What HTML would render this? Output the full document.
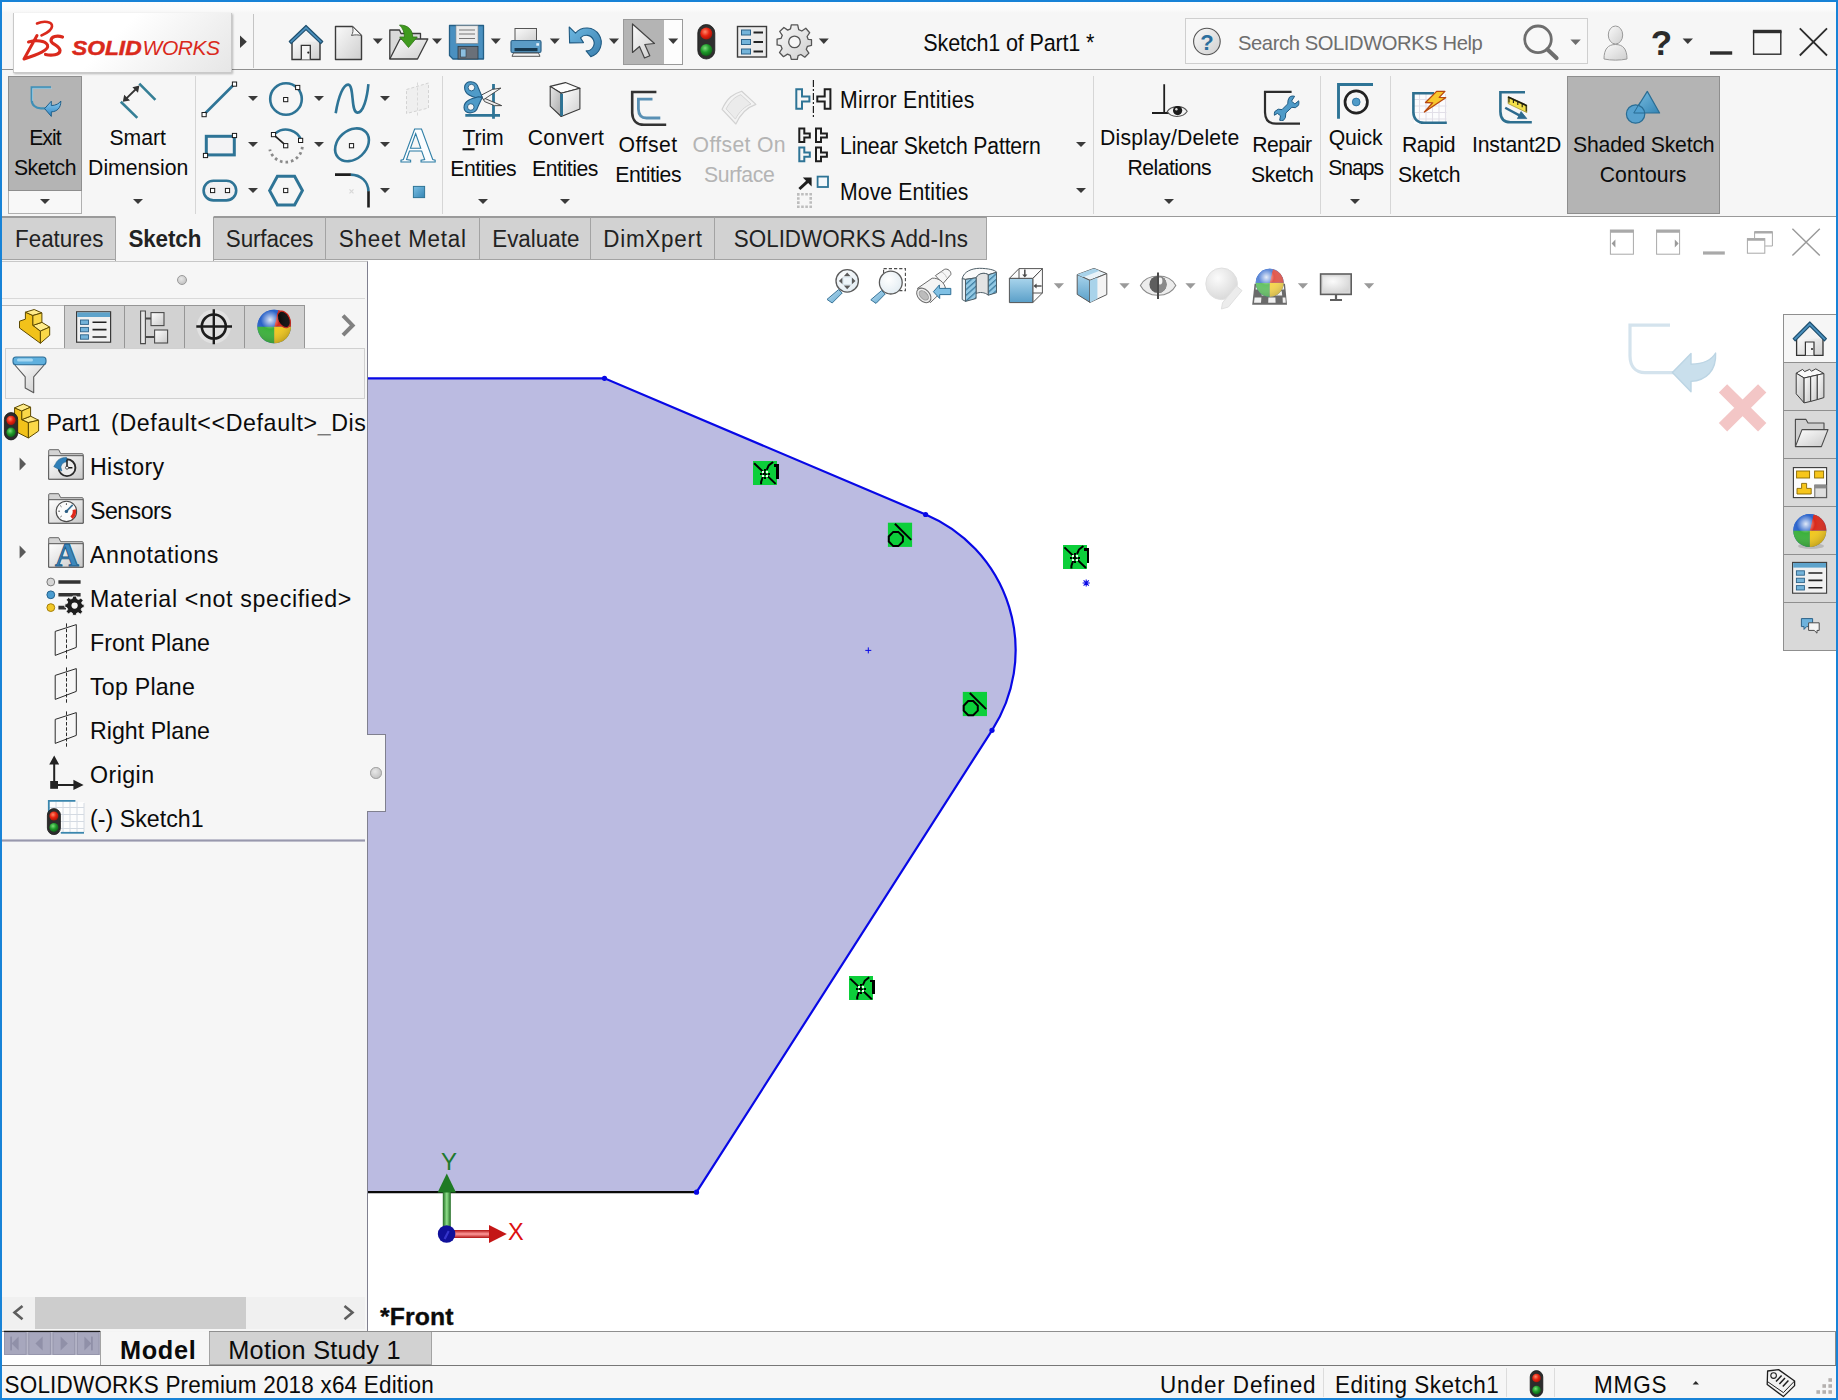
<!DOCTYPE html>
<html lang="en">
<head>
<meta charset="utf-8">
<title>Sketch1 of Part1 * - SOLIDWORKS Premium 2018 x64 Edition</title>
<style>
html,body{margin:0;padding:0}
body{width:1838px;height:1400px;position:relative;overflow:hidden;background:#f6f6f6;font-family:"Liberation Sans",sans-serif;color:#000}
.a{position:absolute}
.t{position:absolute;white-space:pre;line-height:1;color:#0b0b0b}
u{text-decoration-thickness:1.5px;text-underline-offset:3px}
svg{position:absolute;overflow:visible}
.tab{position:absolute;top:217px;height:43px;background:#d2d2d2;border:1px solid #a3a3a3;border-top-color:#9a9a9a;box-sizing:border-box}
.dd{position:absolute;width:0;height:0;border-left:5px solid transparent;border-right:5px solid transparent;border-top:5.5px solid #3a3a3a}
.ddg{position:absolute;width:0;height:0;border-left:5px solid transparent;border-right:5px solid transparent;border-top:5.5px solid #9a9a9a}
.vsep{position:absolute;width:1px;background:#d6d6d6;top:76px;height:138px}
.pressed{position:absolute;background:#b4b4b4;border:1px solid #8e8e8e;box-sizing:border-box}
.ptab{position:absolute;top:305px;height:44px;background:#d2d2d2;border:1px solid #969696;box-sizing:border-box}
.tp{position:absolute;left:1783px;width:53px;height:49px;background:#d9d9d9;border:1px solid #8f8f8f;border-right:none;box-sizing:border-box}
</style>
</head>
<body>
<div id="window-frame">
<!-- window frame / blue border -->
<div class="a" id="frame-top" style="left:0;top:0;width:1838px;height:2px;background:#1883d7"></div>
<div class="a" id="frame-left" style="left:0;top:0;width:2px;height:1400px;background:#1883d7"></div>
<div class="a" id="frame-right" style="left:1836px;top:0;width:2px;height:1400px;background:#1883d7"></div>
<div class="a" id="frame-bottom" style="left:0;top:1398px;width:1838px;height:2px;background:#1883d7"></div>
<!-- graphics area (white) -->
<div class="a" id="viewport" style="left:368px;top:217px;width:1468px;height:1114px;background:#fff"></div>
<!-- title bar bottom line -->
<div class="a" style="left:2px;top:69px;width:1834px;height:1px;background:#8f8f8f"></div>
<!-- ribbon bottom line -->
<div class="a" style="left:2px;top:216px;width:1834px;height:1px;background:#9a9a9a"></div>
<div class="labels">

</div>
</div>
<header id="titlebar">
<!-- title bar -->
<div class="a" style="left:2px;top:2px;width:1834px;height:11px;background:linear-gradient(#fefefe,#fbfbfb 70%,#f6f6f6)"></div>
<div class="a" id="logo-plate" style="left:13px;top:13px;width:219px;height:60px;background:linear-gradient(135deg,#ffffff 45%,#e6e6e6 100%);border:1px solid #c9c9c9;border-top:none;box-shadow:1px 1px 2px rgba(0,0,0,.25);box-sizing:border-box"></div>
<div class="a" style="left:253px;top:14px;width:1px;height:54px;background:#c4c4c4"></div>
<div class="a" id="searchbox" style="left:1185px;top:18px;width:403px;height:46px;border:1px solid #cfcfcf;box-sizing:border-box;background:#f8f8f8"></div>
<div class="pressed" style="left:623px;top:19px;width:60px;height:46px;background:#fdfdfd;border-color:#9a9a9a"></div>
<div class="a" style="left:624px;top:20px;width:40px;height:44px;background:#b4b4b4"></div>
<svg id="title-icons" style="left:0;top:0" width="1838" height="72" viewBox="0 0 1838 72">
<defs>
<linearGradient id="gGray" x1="0" y1="0" x2="1" y2="1"><stop offset="0" stop-color="#fafafa"/><stop offset="1" stop-color="#cfcfcf"/></linearGradient>
<linearGradient id="gBlue" x1="0" y1="0" x2="0" y2="1"><stop offset="0" stop-color="#7fb9dc"/><stop offset="1" stop-color="#3a7fae"/></linearGradient>
<linearGradient id="gUndo" x1="0" y1="0" x2="1" y2="1"><stop offset="0" stop-color="#6db8e2"/><stop offset="1" stop-color="#3a7fae"/></linearGradient>
<radialGradient id="gRed" cx=".4" cy=".35" r=".7"><stop offset="0" stop-color="#ff8a6a"/><stop offset=".5" stop-color="#e8230f"/><stop offset="1" stop-color="#9c1208"/></radialGradient>
<radialGradient id="gGreen" cx=".4" cy=".35" r=".7"><stop offset="0" stop-color="#7be07a"/><stop offset=".5" stop-color="#1f9a2a"/><stop offset="1" stop-color="#0d5c16"/></radialGradient>
</defs>
<!-- DS logo mark -->
<g fill="none" stroke="#da291c" stroke-linecap="round" stroke-linejoin="round">
<path d="M37 23.5 C44 20.5 52.5 21.5 52 26.5 C51.5 31 45.5 33.5 41.5 35.5" stroke-width="2.6"/>
<path d="M28.5 42 C36 40 45 40.5 47.5 45 C49.5 50 38 54.5 24 59 L37 35.5" stroke-width="3"/>
<path d="M62.5 37 C57 35 51 36.5 51 40.5 C51 44.5 59.5 45 60 50.5 C60 55 51.5 56 45.5 54.5" stroke-width="3.2"/>
</g>
<path d="M240 35.5 L246.8 41.8 L240 48Z" fill="#3a3a3a"/>
<!-- home -->
<g>
<path d="M292 41.5 L306 28.6 L320 41.5Z" fill="#f3f3f3"/>
<path d="M292 41.5 H320 V59.5 H292Z" fill="url(#gGray)"/><path d="M292 40 V59.5 H320 V40" fill="none" stroke="#333" stroke-width="1.4"/>
<path d="M301.3 59.5 V45.3 H310.3 V59.5" fill="#f4f4f4" stroke="#333" stroke-width="1.3"/>
<circle cx="308.3" cy="52.6" r="1.1" fill="#222"/>
<path d="M289.3 41.5 L306 25.5 L322.7 41.5 L320.8 43.6 L306 29.6 L291.2 43.6Z" fill="#4a90be" stroke="#1f4f6e" stroke-width="1.2" stroke-linejoin="round"/>
</g>
<!-- new -->
<path d="M335.5 26.5 H352.5 L361.5 35.5 V59.5 H335.5Z" fill="url(#gGray)" stroke="#3c3c3c" stroke-width="1.4" stroke-linejoin="round"/>
<path d="M352.5 26.5 C353.5 30 353 33 351.5 35.5 C355 34.5 358.5 34.8 361.5 35.5Z" fill="#f7f7f7" stroke="#5a5a5a" stroke-width="1"/>
<path d="M372.8 38.5h10l-5 5.5z" fill="#3a3a3a"/>
<!-- open -->
<g stroke-linejoin="round">
<path d="M389.8 59 V30 H399.5 L401 33.5 H420.5 V39" fill="#d9d9d9" stroke="#3c3c3c" stroke-width="1.3"/>
<path d="M389.8 59 L400 39 H427.8 L417.5 59Z" fill="url(#gGray)" stroke="#3c3c3c" stroke-width="1.3"/>
<path d="M399.5 25 C408 25 412.5 29.5 412.7 37 L417.3 37 L408.5 47.5 L399.7 37 L404.5 37 C404.3 31.5 402.5 28 399.5 25Z" fill="#3f9a1e" stroke="#2c7412" stroke-width=".8"/>
</g>
<path d="M432 38.5h10l-5 5.5z" fill="#3a3a3a"/>
<!-- save -->
<g>
<path d="M449.5 25.5 H483.5 V59 H453 L449.5 55.5Z" fill="#4a90c0" stroke="#245f86" stroke-width="1.3" stroke-linejoin="round"/>
<rect x="456" y="25.8" width="22" height="17.5" fill="#ececec" stroke="#8a8a8a" stroke-width=".6"/>
<path d="M459 30h16M459 34h16M459 38.5h16" stroke="#777" stroke-width="1.1"/>
<rect x="458" y="46.5" width="20" height="12.5" fill="#6a7079" stroke="#2c3d4a" stroke-width=".8"/>
<rect x="460.5" y="49" width="5.5" height="8" fill="#8cbfe0" stroke="#2c3d4a" stroke-width=".6"/>
</g>
<path d="M490.8 38.5h10l-5 5.5z" fill="#3a3a3a"/>
<!-- print -->
<g>
<rect x="515" y="28.5" width="21.5" height="14" fill="url(#gGray)" stroke="#555" stroke-width="1"/>
<rect x="511" y="40.5" width="30" height="12" rx="1.5" fill="#5b9cc6" stroke="#2d6288" stroke-width="1.2"/>
<rect x="514.5" y="48" width="23" height="3.2" fill="#17384e"/>
<rect x="536.3" y="43.2" width="2.8" height="2.5" fill="#e8f3fa"/>
<path d="M513.5 53 H538.5 L540 56.3 H512Z" fill="#f3f3f3" stroke="#555" stroke-width="1"/>
</g>
<path d="M549.8 38.5h10l-5 5.5z" fill="#3a3a3a"/>
<!-- undo -->
<path d="M569.2 27 L575.5 33.2 A14.6 14.6 0 1 1 590.8 56.6 L586.1 50.9 A7.8 7.8 0 1 0 580.5 37.9 L583.5 42.6 L569.6 42.9Z" fill="url(#gUndo)" stroke="#1f5a82" stroke-width="1.1" stroke-linejoin="round"/>
<path d="M609 38.5h10l-5 5.5z" fill="#3a3a3a"/>
<!-- select cursor -->
<path d="M632.5 24 V52.5 L639.5 46.5 L644.5 58 L649.8 55.7 L644.8 44.5 L654.5 43.5Z" fill="url(#gGray)" stroke="#444" stroke-width="1.2" stroke-linejoin="round"/>
<path d="M668.2 38.5h10l-5 5.5z" fill="#3a3a3a"/>
<!-- traffic light -->
<rect x="697.8" y="24.5" width="17" height="34.5" rx="8.5" fill="#2f2f2f" stroke="#1a1a1a" stroke-width=".8"/>
<circle cx="706.3" cy="33.6" r="6" fill="url(#gRed)"/>
<circle cx="706.3" cy="49.9" r="6" fill="url(#gGreen)"/>
<!-- options -->
<g>
<rect x="737.5" y="26.5" width="29" height="30.5" fill="#ececec" stroke="#3c3c3c" stroke-width="1.4"/>
<g fill="#74b4da" stroke="#2d6288" stroke-width="1"><rect x="741.5" y="30" width="9" height="5"/><rect x="741.5" y="39.5" width="9" height="5"/><rect x="741.5" y="49" width="9" height="5"/></g>
<path d="M753.5 32.5h9.5M753.5 42h9.5M753.5 51.5h9.5" stroke="#222" stroke-width="1.8"/>
</g>
<!-- gear -->
<g transform="translate(794.5 41.9)">
<path id="gearp" fill="url(#gGray)" stroke="#555" stroke-width="1.3" stroke-linejoin="round" d="M-3.2 -17 H3.2 L4.2 -12.3 L7.3 -10.9 L11.3 -13.6 L15.2 -9.2 L12.6 -5.4 L13.6 -2.6 L17 -2.2 V3.4 L13 4.4 L11.8 7.4 L14.4 11.2 L10.3 15.3 L6.4 12.6 L3.6 13.8 L2.8 17.4 H-3.2 L-4.2 13.4 L-7 12.2 L-11 14.8 L-15 10.6 L-12.4 6.8 L-13.6 3.8 L-17.4 3 V-2.8 L-13.4 -3.6 L-12.2 -6.6 L-14.8 -10.4 L-10.6 -14.4 L-6.8 -11.8 L-4 -13Z"/>
<circle r="5.8" fill="#f6f6f6" stroke="#555" stroke-width="1.3"/>
</g>
<path d="M818.8 38.5h10l-5 5.5z" fill="#3a3a3a"/>
<!-- help circle -->
<circle cx="1206.9" cy="41.5" r="13.3" fill="url(#gGray)" stroke="#555" stroke-width="1.1"/>
<text x="1206.9" y="49.5" font-family="Liberation Sans, sans-serif" font-weight="bold" font-size="22" fill="#2a6f9e" text-anchor="middle">?</text>
<!-- search magnifier -->
<circle cx="1538" cy="39.3" r="13.3" fill="none" stroke="#6e6e6e" stroke-width="2.8"/>
<path d="M1547.5 49.5 L1556.5 58" stroke="#6e6e6e" stroke-width="4.2" stroke-linecap="round"/>
<path d="M1570.4 39.5h10.4l-5.2 5.6z" fill="#6e6e6e"/>
<!-- user -->
<g>
<path d="M1604 59 C1604 49 1608 44.5 1615.5 44.5 C1623 44.5 1627 49 1627 59 C1620 60.5 1611 60.5 1604 59Z" fill="url(#gGray)" stroke="#9a9a9a" stroke-width="1"/>
<ellipse cx="1615.5" cy="35" rx="7.2" ry="9" fill="url(#gGray)" stroke="#9a9a9a" stroke-width="1"/>
</g>
<text x="1661.5" y="55" font-family="Liberation Sans, sans-serif" font-weight="bold" font-size="35" fill="#2b2b2b" text-anchor="middle">?</text>
<path d="M1682.6 38.5h10.4l-5.2 5.6z" fill="#3a3a3a"/>
<!-- window buttons -->
<rect x="1710" y="51.3" width="22.2" height="3.4" fill="#2d2d2d"/>
<rect x="1753.6" y="31.6" width="27.2" height="22.6" fill="none" stroke="#2d2d2d" stroke-width="1.4"/>
<rect x="1752.9" y="29.8" width="28.6" height="3.4" fill="#2d2d2d"/>
<path d="M1799.8 28.3 L1827 55.5 M1827 28.3 L1799.8 55.5" stroke="#2d2d2d" stroke-width="1.8"/>
</svg>
<span class="t" style="left:71.5px;top:37.4px;font-size:21px;font-style:italic;font-weight:bold;color:#da291c;-webkit-text-stroke:.5px #da291c;transform-origin:0 0;transform:scaleX(1.085)" id="logo-solid">SOLID</span>
<span class="t" style="left:142.6px;top:37.4px;font-size:21px;font-style:italic;color:#da291c;letter-spacing:-0.45px" id="logo-works">WORKS</span>
<div class="labels">
<span class="t" style="left:923.3px;top:33.2px;font-size:21.6px;letter-spacing:-0.175px;transform-origin:0 84.65%;transform:scaleY(1.07);">Sketch1 of Part1 *</span>
<span class="t" style="left:1238.0px;top:33.0px;font-size:20.2px;color:#6e6e6e;letter-spacing:-0.416px;transform-origin:0 84.65%;transform:scaleY(1.04);">Search SOLIDWORKS Help</span>
</div>
</header>
<div id="commandmanager" role="toolbar">
<!-- ribbon (Sketch CommandManager) -->
<div class="pressed" style="left:8px;top:76px;width:74px;height:138px;background:#f8f8f8;border-color:#b0b0b0"></div>
<div class="pressed" style="left:8px;top:76px;width:74px;height:115px"></div>
<div class="pressed" style="left:1567px;top:76px;width:153px;height:138px"></div>
<div class="vsep" style="left:195px"></div>
<div class="vsep" style="left:442px"></div>
<div class="vsep" style="left:1093px"></div>
<div class="vsep" style="left:1320px"></div>
<div class="vsep" style="left:1390px"></div>
<div class="dd" style="left:40px;top:199.3px"></div>
<div class="dd" style="left:133px;top:199.3px"></div>
<div class="dd" style="left:478px;top:199.3px"></div>
<div class="dd" style="left:560px;top:199.3px"></div>
<div class="dd" style="left:1164px;top:199.3px"></div>
<div class="dd" style="left:1350px;top:199.3px"></div>
<div class="dd" style="left:1076px;top:142.3px"></div>
<div class="dd" style="left:1076px;top:188.3px"></div>
<div class="dd" style="left:248px;top:96px"></div>
<div class="dd" style="left:314px;top:96px"></div>
<div class="dd" style="left:380px;top:96px"></div>
<div class="dd" style="left:248px;top:142px"></div>
<div class="dd" style="left:314px;top:142px"></div>
<div class="dd" style="left:380px;top:142px"></div>
<div class="dd" style="left:248px;top:188px"></div>
<div class="dd" style="left:380px;top:188px"></div>
<svg id="ribbon-icons" style="left:0;top:0" width="1838" height="216" viewBox="0 0 1838 216">
<defs>
<linearGradient id="gArrowB" x1="0" y1="0" x2="0" y2="1"><stop offset="0" stop-color="#8ccbf0"/><stop offset="1" stop-color="#2f86c4"/></linearGradient>
<linearGradient id="gCubeL" x1="0" y1="0" x2="1" y2="1"><stop offset="0" stop-color="#e8e8e8"/><stop offset="1" stop-color="#a8a8a8"/></linearGradient>
<linearGradient id="gCubeR" x1="0" y1="0" x2="1" y2="1"><stop offset="0" stop-color="#ffffff"/><stop offset="1" stop-color="#d0d0d0"/></linearGradient>
<linearGradient id="gPt" x1="0" y1="0" x2="1" y2="1"><stop offset="0" stop-color="#7cc0e4"/><stop offset="1" stop-color="#3585b4"/></linearGradient>
</defs>
<g id="sq" fill="#fff" stroke="#1a1a1a" stroke-width="1">
</g>
<!-- exit sketch -->
<path d="M51 87.4 H31.7 V100 C31.7 105 35.5 108.3 41 108.3 H46" fill="none" stroke="#3f8fb6" stroke-width="2.2"/>
<path d="M51 87.4 H31.7 V100" fill="none" stroke="#9ed0ea" stroke-width=".8" transform="translate(.9 .9)"/>
<path d="M44.6 108.6 L51.3 101.2 L51.3 105.6 C56 105.4 59.3 103.6 60.8 101 C61 108 57 111.6 51.3 111.9 L51.3 116.4Z" fill="url(#gArrowB)" stroke="#1f5f8a" stroke-width="1" stroke-linejoin="round"/>
<!-- smart dimension -->
<path d="M120.8 101.8 L137.3 117.9 M139.3 83.6 L155.4 99.9" stroke="#357f96" stroke-width="2.6"/>
<path d="M126.2 98.6 L136 89" stroke="#333" stroke-width="1.8"/>
<path d="M122.8 101.8 L124.2 94.8 L130 100.4Z M139.4 85.6 L132.4 87.2 L138 92.8Z" fill="#333"/>
<!-- line -->
<path d="M204 114.5 L234.5 84" stroke="#2e7496" stroke-width="2.6"/>
<g fill="#fff" stroke="#1a1a1a" stroke-width="1"><rect x="202" y="112.5" width="4.2" height="4.2"/><rect x="232.4" y="82" width="4.2" height="4.2"/></g>
<!-- circle -->
<circle cx="286" cy="99" r="15.8" fill="none" stroke="#2e7496" stroke-width="2.6"/>
<g fill="#fff" stroke="#1a1a1a" stroke-width="1"><rect x="283.6" y="97.5" width="4.2" height="4.2"/><rect x="295.6" y="85.4" width="4.2" height="4.2"/></g>
<!-- spline -->
<path d="M335.7 113.3 C338.5 96 343.5 84.2 348.3 84.6 C354.5 85.2 350.5 112.2 357.3 112.6 C363.2 113 367.2 98 368.4 84.2" fill="none" stroke="#2e7496" stroke-width="2.6"/>
<!-- plane (disabled) -->
<path d="M406.5 89.5 L428.5 83 V108 L406.5 113.5Z" fill="#efefef" stroke="#d3d3d3" stroke-width="1" stroke-dasharray="3 2"/>
<path d="M417.5 82.5 V116" stroke="#d9d9d9" stroke-width="1" stroke-dasharray="3 2"/>
<!-- rectangle -->
<rect x="206.3" y="136.3" width="28" height="18.6" fill="#f3f3f5" stroke="#2e7496" stroke-width="3"/>
<g fill="#fff" stroke="#1a1a1a" stroke-width="1"><rect x="232.4" y="133.4" width="4.2" height="4.2"/><rect x="203.4" y="153.4" width="4.2" height="4.2"/></g>
<!-- centerpoint arc -->
<path d="M275.5 133.2 A16.5 16.5 0 0 1 301.5 140.8" fill="none" stroke="#2e7496" stroke-width="2.6"/>
<path d="M302.3 146.8 A16.5 16.5 0 0 1 269.8 149.5" fill="none" stroke="#8a8a8a" stroke-width="2.8" stroke-dasharray="2.6 3"/>
<path d="M273.5 134.6 L286 145.7" stroke="#222" stroke-width="1.8"/>
<g fill="#fff" stroke="#1a1a1a" stroke-width="1"><rect x="271.4" y="132.5" width="4.2" height="4.2"/><rect x="283.6" y="143.6" width="4.2" height="4.2"/><rect x="298.5" y="138.3" width="4.2" height="4.2"/></g>
<!-- ellipse -->
<ellipse cx="352" cy="144.8" rx="18.8" ry="14.2" transform="rotate(-42 352 144.8)" fill="none" stroke="#2e7496" stroke-width="2.6"/>
<rect x="349.4" y="143.6" width="4.2" height="4.2" fill="#fff" stroke="#1a1a1a" stroke-width="1"/>
<!-- text A -->
<text x="418" y="161.6" font-family="Liberation Serif, serif" font-weight="bold" font-size="50" text-anchor="middle" fill="#fbfdff" stroke="#2e7ea6" stroke-width="1.1" textLength="35" lengthAdjust="spacingAndGlyphs">A</text>
<!-- slot -->
<rect x="203.6" y="180.8" width="32.6" height="19.6" rx="9.8" fill="#f1f1f3" stroke="#2e7496" stroke-width="2.6"/>
<g fill="#fff" stroke="#1a1a1a" stroke-width="1"><rect x="210.5" y="188.4" width="4.2" height="4.2"/><rect x="225.4" y="188.4" width="4.2" height="4.2"/></g>
<!-- polygon -->
<path d="M269.6 190.6 L277.4 176.2 H294.6 L302.4 190.6 L294.6 205 H277.4Z" fill="none" stroke="#2e7496" stroke-width="3" stroke-linejoin="miter"/>
<rect x="283.6" y="188.4" width="4.2" height="4.2" fill="#fff" stroke="#1a1a1a" stroke-width="1"/>
<!-- fillet -->
<path d="M350.5 174.6 C361 174.8 368.3 181.5 368.5 191.6" fill="none" stroke="#2e7496" stroke-width="2.6"/>
<path d="M335 174.6 H350.8 M368.5 191.3 V207.5" stroke="#1e1e1e" stroke-width="2.6"/>
<path d="M349.5 189.4l4 4M353.5 189.4l-4 4" stroke="#d8d8d8" stroke-width="1.2"/>
<!-- point -->
<rect x="413.4" y="186.4" width="11.2" height="11.2" fill="url(#gPt)" stroke="#2e7496" stroke-width="1"/>
<!-- trim -->
<g>
<path d="M493.5 84 V118.8 M465.3 115.4 H500" stroke="#2e7496" stroke-width="2.8"/>
<path d="M482.4 97.4 L501.7 105.6 L494.6 105.7 L484.6 101.6Z" fill="#ededed" stroke="#3a3a3a" stroke-width=".9" stroke-linejoin="round"/>
<path d="M481.2 95.2 L492.4 89.4 L500.9 88.1 L483.4 99.8Z" fill="#f7f7f7" stroke="#3a3a3a" stroke-width=".9" stroke-linejoin="round"/>
<path d="M464.6 87.4 C464.6 79.6 476.4 80 478.4 88 L482 96.6 L478.6 98.4 C472 96.6 464.6 94.6 464.6 87.4Z" fill="#4f9bc8" stroke="#1f5a82" stroke-width="1.1" stroke-linejoin="round"/>
<path d="M464 107.4 C464 100.6 471.4 98.6 478.4 96.8 L482.2 97.4 L478 106.6 C475.8 114.6 464 115 464 107.4Z" fill="#4f9bc8" stroke="#1f5a82" stroke-width="1.1" stroke-linejoin="round"/>
<circle cx="471.4" cy="87.6" r="3.3" fill="#f6f6f6" stroke="#1f5a82" stroke-width=".9"/>
<circle cx="470.8" cy="107" r="3.3" fill="#f6f6f6" stroke="#1f5a82" stroke-width=".9"/>
</g>
<!-- convert entities cube -->
<g stroke-linejoin="round">
<path d="M550.2 86.4 L565.4 82.6 L579.9 88.3 L561.2 93.3Z" fill="#fdfdfd" stroke="#3a3a3a" stroke-width="1.1"/>
<path d="M550.2 86.4 L561.2 93.3 V116.5 L550.2 106.2Z" fill="url(#gCubeL)" stroke="#3a3a3a" stroke-width="1.1"/>
<path d="M561.2 93.3 L579.9 88.3 V108.9 L561.2 116.5Z" fill="url(#gCubeR)" stroke="#3a3a3a" stroke-width="1.1"/>
<path d="M561.6 93.8 V115.8" stroke="#2e7496" stroke-width="2.8"/>
</g>
<!-- offset entities -->
<path d="M656.4 92 H632.2 V113 C632.4 120.5 637 124.8 644 124.8 H666.2" fill="none" stroke="#333" stroke-width="2.6"/>
<path d="M652.5 99.2 H638.4 V109 C638.6 114.6 641.4 118 646.5 118 H660.3" fill="none" stroke="#5990b4" stroke-width="2.8"/>
<!-- offset on surface (disabled) -->
<path d="M722.1 109.3 C727.5 97.6 733.4 93.7 741.7 91.2 L755.9 104.4 C747.1 107.4 740.3 114.2 735.9 124Z" fill="#f3f3f3" stroke="#d2d2d2" stroke-width="1.2" stroke-linejoin="round"/>
<path d="M726.1 108.9 C730.5 100.5 735.4 96.6 740.8 94.7 L751 104 C745.2 106.4 739.3 111.3 735.4 119.1Z" fill="#ebebeb" stroke="#d6d6d6" stroke-width="1"/>
<!-- mirror entities -->
<path d="M796.3 89.3 H802 V96.6 H809.4 V101.4 H802 V108.7 H796.3Z" fill="none" stroke="#2e7496" stroke-width="2"/>
<path d="M830.4 89.3 H824.7 V96.6 H817.3 V101.4 H824.7 V108.7 H830.4Z" fill="none" stroke="#1e1e1e" stroke-width="2"/>
<path d="M813.4 80 V118" stroke="#1e1e1e" stroke-width="1.2" stroke-dasharray="7 2 2 2"/>
<!-- linear pattern -->
<g fill="none" stroke-width="2">
<path d="M799.3 128.5 H804.3 V133.4 H809.8 V137.6 H804.3 V142 H799.3Z" stroke="#1e1e1e"/>
<path d="M816 128.5 H821 V133.4 H826.9 V137.6 H821 V142 H816Z" stroke="#1e1e1e"/>
<path d="M799.3 147.6 H804.3 V152.6 H809.8 V156.8 H804.3 V161.3 H799.3Z" stroke="#2e7496"/>
<path d="M816 147.6 H821 V152.6 H826.9 V156.8 H821 V161.3 H816Z" stroke="#1e1e1e"/>
</g>
<!-- move entities -->
<path d="M799.4 189 L808.5 180.6" stroke="#1e1e1e" stroke-width="3"/>
<path d="M802.8 177.6 H811.6 V186.4Z" fill="#1e1e1e"/>
<rect x="817.6" y="176.6" width="10.4" height="10.4" fill="#f4f8fb" stroke="#2e7496" stroke-width="1.8"/>
<rect x="798.3" y="194.3" width="12.4" height="12.4" fill="none" stroke="#bdbdbd" stroke-width="2.6" stroke-dasharray="2.6 1.53" stroke-dashoffset="1.3"/>
<!-- display/delete relations -->
<path d="M1164.2 84.3 V113 M1152 113 H1170" stroke="#1e1e1e" stroke-width="1.8"/>
<path d="M1167.2 111.6 C1171 105.4 1183 104.6 1187.2 111.2 C1183 118 1171 118.2 1167.2 111.6Z" fill="#f2f2f2" stroke="#555" stroke-width="1.1"/>
<circle cx="1177.6" cy="110.6" r="4.6" fill="#1a1a1a"/><circle cx="1176.4" cy="109.2" r="1.2" fill="#ddd"/>
<!-- repair sketch -->
<path d="M1291.6 91.8 H1265 V112.4 C1265.2 119.6 1269.2 123.7 1276 123.7 H1300" fill="none" stroke="#2d2d2d" stroke-width="2.2"/>
<path d="M1288.1 100.1 L1289.6 97 C1291 96 1293 95.8 1294.6 96.3 L1291.5 101.2 L1294.9 103.9 L1298.7 100.8 C1299 102.4 1299 104 1298.4 105.4 L1295.3 107.7 L1291.9 107.3 L1285.8 113 L1285.4 117.6 L1283.5 120.3 C1282.2 120.6 1281 120.6 1279.7 120.3 L1280.5 115.7 L1277.4 113.4 L1274.4 115.3 C1274.2 114 1274.4 112.6 1274.8 111.5 L1278.2 109.2 L1282 109.6 L1287.7 103.9Z" fill="#4f9bc8" stroke="#1f5a82" stroke-width="1" stroke-linejoin="round"/>
<!-- quick snaps -->
<path d="M1373 84.5 H1338.5 V118.7" fill="none" stroke="#2e7496" stroke-width="2.9"/>
<circle cx="1356.2" cy="102" r="11.2" fill="none" stroke="#222" stroke-width="2.7"/>
<circle cx="1356.2" cy="102" r="3.9" fill="#4f9bc8" stroke="#246a98" stroke-width=".8"/>
<!-- rapid sketch -->
<g>
<path d="M1414 94 H1446 V124 H1414Z" fill="#fcfcfd"/>
<path d="M1419.5 94 V124 M1426 94 V124 M1432.5 94 V124 M1439 94 V124 M1445.5 94 V124 M1412 99.5 H1446.5 M1412 106 H1446.5 M1412 112.5 H1446.5 M1412 119 H1446.5" stroke="#e2dfe8" stroke-width="1.1"/>
<path d="M1434 93.2 H1413.4 V112.5 C1413.6 119 1417.6 122.8 1424 122.8 H1446.8" fill="none" stroke="#2e6f8f" stroke-width="2.6"/>
<path d="M1436.6 91.4 H1444.9 L1439.2 97.4 L1445.7 97.7 L1424.4 112 L1432.7 102.8 L1425.5 102.5Z" fill="#f8c62c" stroke="#b8480e" stroke-width="1.3" stroke-linejoin="round"/>
</g>
<!-- instant2d -->
<g>
<path d="M1525 92.2 H1500.4 V111.6 C1500.6 118.4 1504 122.3 1510.4 122.3 H1531.8" fill="none" stroke="#2e6f8f" stroke-width="2.6"/>
<path d="M1508.1 96.6 L1526.8 105.3 V112.6 L1508.1 103.6Z" fill="#f3e04a" stroke="#8a7d10" stroke-width=".6" stroke-linejoin="round"/>
<path d="M1508.1 97 L1526.8 105.7" stroke="#1e1e10" stroke-width="1.8"/>
<path d="M1509 97.4 V102.6 M1513.4 99.4 V103 M1517.8 101.4 V105 M1522.2 103.4 V107.2 M1526.2 105.4 V111.4" stroke="#1e1e10" stroke-width="1.1"/>
<path d="M1505.2 107.8 L1519.4 115.4" stroke="#2d6a8e" stroke-width="2.4"/>
<path d="M1521.1 111.6 L1526.8 118.6 H1517.4Z" fill="#2d6a8e" stroke="#2d6a8e" stroke-width=".8" stroke-linejoin="round"/>
</g>
<!-- shaded sketch contours -->
<path d="M1647.3 91.4 L1659.6 113 H1633.8Z" fill="url(#gPt)" stroke="#2a6d94" stroke-width="1.2" stroke-linejoin="round"/>
<circle cx="1635.6" cy="114" r="9.2" fill="#4f9fd0" fill-opacity=".92" stroke="#2a6d94" stroke-width="1.2"/>
<path d="M1633.8 113 L1640 102.4" stroke="#2a6d94" stroke-width="1" fill="none"/>
<path d="M1633.8 113 H1644.8" stroke="#2a6d94" stroke-width="1"/>
</svg>
<div class="labels">
<span class="t" style="left:29.2px;top:127.3px;font-size:21.2px;letter-spacing:-0.951px;transform-origin:0 84.65%;transform:scaleY(1.06);">Exit</span>
<span class="t" style="left:13.9px;top:157.3px;font-size:21.2px;letter-spacing:-0.451px;transform-origin:0 84.65%;transform:scaleY(1.06);">Sketch</span>
<span class="t" style="left:109.4px;top:127.3px;font-size:21.2px;letter-spacing:0.019px;transform-origin:0 84.65%;transform:scaleY(1.06);">Smart</span>
<span class="t" style="left:88.1px;top:157.3px;font-size:21.2px;letter-spacing:0.001px;transform-origin:0 84.65%;transform:scaleY(1.06);">Dimension</span>
<span class="t" style="left:462.5px;top:127.2px;font-size:21.2px;letter-spacing:-0.108px;transform-origin:0 84.65%;transform:scaleY(1.06);"><u>T</u>rim</span>
<span class="t" style="left:450.2px;top:157.6px;font-size:21.2px;letter-spacing:-0.438px;transform-origin:0 84.65%;transform:scaleY(1.06);">Entities</span>
<span class="t" style="left:527.7px;top:127.2px;font-size:21.2px;letter-spacing:0.340px;transform-origin:0 84.65%;transform:scaleY(1.06);">Convert</span>
<span class="t" style="left:532.0px;top:157.6px;font-size:21.2px;letter-spacing:-0.438px;transform-origin:0 84.65%;transform:scaleY(1.06);">Entities</span>
<span class="t" style="left:618.6px;top:133.5px;font-size:21.2px;letter-spacing:0.484px;transform-origin:0 84.65%;transform:scaleY(1.06);">Offset</span>
<span class="t" style="left:615.3px;top:164.4px;font-size:21.2px;letter-spacing:-0.465px;transform-origin:0 84.65%;transform:scaleY(1.06);">Entities</span>
<span class="t" style="left:692.6px;top:133.5px;font-size:21.2px;color:#b4b4b4;letter-spacing:0.330px;transform-origin:0 84.65%;transform:scaleY(1.06);">Offset On</span>
<span class="t" style="left:704.0px;top:164.4px;font-size:21.2px;color:#b4b4b4;letter-spacing:-0.389px;transform-origin:0 84.65%;transform:scaleY(1.06);">Surface</span>
<span class="t" style="left:840.0px;top:89.9px;font-size:21.2px;letter-spacing:0.263px;transform-origin:0 84.65%;transform:scaleY(1.1);">Mirror Entities</span>
<span class="t" style="left:840.0px;top:136.1px;font-size:21.2px;letter-spacing:-0.154px;transform-origin:0 84.65%;transform:scaleY(1.1);">Linear Sketch Pattern</span>
<span class="t" style="left:840.0px;top:182.2px;font-size:21.2px;letter-spacing:0.105px;transform-origin:0 84.65%;transform:scaleY(1.1);">Move Entities</span>
<span class="t" style="left:1100.1px;top:127.0px;font-size:21.2px;letter-spacing:0.192px;transform-origin:0 84.65%;transform:scaleY(1.06);">Display/Delete</span>
<span class="t" style="left:1127.4px;top:156.5px;font-size:21.2px;letter-spacing:-0.511px;transform-origin:0 84.65%;transform:scaleY(1.06);">Relations</span>
<span class="t" style="left:1252.3px;top:134.1px;font-size:21.2px;letter-spacing:-0.531px;transform-origin:0 84.65%;transform:scaleY(1.06);">Repair</span>
<span class="t" style="left:1251.0px;top:164.1px;font-size:21.2px;letter-spacing:-0.415px;transform-origin:0 84.65%;transform:scaleY(1.06);">Sketch</span>
<span class="t" style="left:1328.7px;top:127.0px;font-size:21.2px;letter-spacing:-0.060px;transform-origin:0 84.65%;transform:scaleY(1.06);">Quick</span>
<span class="t" style="left:1328.2px;top:156.5px;font-size:21.2px;letter-spacing:-1.062px;transform-origin:0 84.65%;transform:scaleY(1.06);">Snaps</span>
<span class="t" style="left:1402.0px;top:133.5px;font-size:21.2px;letter-spacing:-0.435px;transform-origin:0 84.65%;transform:scaleY(1.06);">Rapid</span>
<span class="t" style="left:1398.0px;top:164.4px;font-size:21.2px;letter-spacing:-0.451px;transform-origin:0 84.65%;transform:scaleY(1.06);">Sketch</span>
<span class="t" style="left:1472.0px;top:133.5px;font-size:21.2px;letter-spacing:-0.177px;transform-origin:0 84.65%;transform:scaleY(1.06);">Instant2D</span>
<span class="t" style="left:1573.0px;top:133.5px;font-size:21.2px;letter-spacing:-0.177px;transform-origin:0 84.65%;transform:scaleY(1.06);">Shaded Sketch</span>
<span class="t" style="left:1599.7px;top:164.4px;font-size:21.2px;letter-spacing:0.109px;transform-origin:0 84.65%;transform:scaleY(1.06);">Contours</span>
</div>
</div>
<nav id="commandmanager-tabs">
<!-- CommandManager tabs -->
<div class="tab" style="left:2px;width:114px;border-left:none"></div>
<div class="tab" style="left:115px;width:99px;background:#f6f6f6;border-top-color:#f6f6f6;border-bottom-color:#f6f6f6;top:216px;height:46px"></div>
<div class="tab" style="left:213px;width:113px"></div>
<div class="tab" style="left:325px;width:155px"></div>
<div class="tab" style="left:479px;width:112px"></div>
<div class="tab" style="left:590px;width:125px"></div>
<div class="tab" style="left:714px;width:273px"></div>
<div class="labels">
<span class="t" style="left:15.0px;top:228.9px;font-size:22.4px;color:#222;letter-spacing:0.003px;transform-origin:0 84.65%;transform:scaleY(1.087);">Features</span>
<span class="t" style="left:128.4px;top:228.9px;font-size:22.4px;font-weight:bold;color:#222;letter-spacing:-0.098px;transform-origin:0 84.65%;transform:scaleY(1.087);">Sketch</span>
<span class="t" style="left:225.8px;top:228.9px;font-size:22.4px;color:#222;letter-spacing:-0.103px;transform-origin:0 84.65%;transform:scaleY(1.087);">Surfaces</span>
<span class="t" style="left:338.7px;top:228.9px;font-size:22.4px;color:#222;letter-spacing:0.790px;transform-origin:0 84.65%;transform:scaleY(1.087);">Sheet Metal</span>
<span class="t" style="left:492.2px;top:228.9px;font-size:22.4px;color:#222;letter-spacing:0.008px;transform-origin:0 84.65%;transform:scaleY(1.087);">Evaluate</span>
<span class="t" style="left:603.2px;top:228.9px;font-size:22.4px;color:#222;letter-spacing:0.796px;transform-origin:0 84.65%;transform:scaleY(1.087);">DimXpert</span>
<span class="t" style="left:733.8px;top:228.9px;font-size:22.4px;color:#222;letter-spacing:0.009px;transform-origin:0 84.65%;transform:scaleY(1.087);">SOLIDWORKS Add-Ins</span>
</div>
</nav>
<main id="graphics-area">
<!-- sketch geometry -->
<svg id="sketch" style="left:0;top:0" width="1838" height="1400" viewBox="0 0 1838 1400">
<path d="M368 378.3 L604.5 378.3 L925.6 514.5 A147.4 147.4 0 0 1 992 730.3 L696.5 1192.2 L368 1192.2 Z" fill="#bbbbe1"/>
<path d="M368 378.3 L604.5 378.3 L925.6 514.5 A147.4 147.4 0 0 1 992 730.3 L696.5 1192.2" fill="none" stroke="#0808e6" stroke-width="2.2"/>
<path d="M368 1192.2 L696.5 1192.2" stroke="#0a0a0a" stroke-width="2.2"/>
<g fill="#0808e6"><circle cx="604.5" cy="378.3" r="2.6"/><circle cx="925.6" cy="514.5" r="2.6"/><circle cx="992" cy="730.3" r="2.6"/><circle cx="696.5" cy="1192.2" r="2.6"/></g>
<path d="M865.3 650.4h6M868.3 647.4v6" stroke="#0808e6" stroke-width="1"/>
<path d="M1082.6 583h7.2M1086.2 579.4v7.2M1083.6 580.4l5.2 5.2M1088.8 580.4l-5.2 5.2" stroke="#0808e6" stroke-width="1.1"/>
</svg>
<svg id="hud" style="left:0;top:0" width="1838" height="700" viewBox="0 0 1838 700">
<defs>
<linearGradient id="gLB" x1="0" y1="0" x2="1" y2="1"><stop offset="0" stop-color="#bfe0f2"/><stop offset="1" stop-color="#5fa6cf"/></linearGradient>
<linearGradient id="gLBv" x1="0" y1="0" x2="0" y2="1"><stop offset="0" stop-color="#a8d4ec"/><stop offset="1" stop-color="#5a9fc8"/></linearGradient>
<radialGradient id="gLens" cx=".4" cy=".35" r=".75"><stop offset="0" stop-color="#ffffff"/><stop offset="1" stop-color="#dfeaf1"/></radialGradient>
<radialGradient id="gGrayBall" cx=".38" cy=".32" r=".8"><stop offset="0" stop-color="#fbfbfb"/><stop offset="1" stop-color="#d4d4d4"/></radialGradient>
<pattern id="hatch" width="4.2" height="4.2" patternUnits="userSpaceOnUse" patternTransform="rotate(-42)"><rect width="4.2" height="4.2" fill="#93c9e4"/><rect width="4.2" height="1.3" fill="#3f7fa2"/></pattern>
<g id="ball4">
 <circle r="16.2" fill="#2a62c8"/>
 <path d="M0 0 H-16.2 A16.2 16.2 0 0 0 0 16.2Z" fill="#3bb13b"/>
 <path d="M0 0 V16.2 A16.2 16.2 0 0 0 16.2 0Z" fill="#f2c81c"/>
 <path d="M0 0 H16.2 A16.2 16.2 0 0 0 3.6 -15.8Z" fill="#d92a1c"/>
 <path d="M0 0 L3.6 -15.8 A16.2 16.2 0 0 0 -16.2 0Z" fill="#2e66cc"/>
 <circle r="16.2" fill="url(#gBall)"/>
</g>
</defs>
<!-- zoom to fit -->
<g>
<path d="M838.6 289.6 L842.2 293 L832.2 303 L827 299.4Z" fill="url(#gLB)" stroke="#3a7599" stroke-width="1"/>
<circle cx="847.2" cy="280.9" r="11.2" fill="url(#gLens)" stroke="#5a5a5a" stroke-width="1.3"/>
<path d="M847.2 272.6 l3.4 3.6 h-6.8z M847.2 289.2 l3.4 -3.6 h-6.8z M838.9 280.9 l3.6 -3.4 v6.8z M855.5 280.9 l-3.6 -3.4 v6.8z" fill="#5a5a5a"/>
<rect x="843" y="277" width="8.4" height="7.8" fill="#eef5f9" stroke="#c4d3dc" stroke-width=".6"/>
</g>
<!-- zoom to area -->
<g>
<rect x="883.6" y="268.6" width="21.8" height="22" fill="none" stroke="#4a4a4a" stroke-width="1.1" stroke-dasharray="3.2 2"/>
<path d="M881.6 290.6 L885.2 294 L876 303.4 L870.8 299.8Z" fill="url(#gLB)" stroke="#3a7599" stroke-width="1"/>
<circle cx="890.8" cy="282.6" r="11.4" fill="url(#gLens)" stroke="#5a5a5a" stroke-width="1.3"/>
</g>
<!-- previous view -->
<g stroke="#6a6a6a" stroke-width="1" stroke-linejoin="round">
<path d="M935.4 275.6 L944.4 269.4 C947.6 268 951.6 271.4 950.8 274.6 L942.8 283.8Z" fill="#f6f6f6"/>
<path d="M940.6 271.8 C943.4 272.4 945.6 274.8 946.6 277.6" fill="none" stroke="#c4c4c4"/>
<path d="M917.4 288.4 L932.2 278.2 C938.6 277.6 944.6 282.6 945.4 288.2 L930.4 302.6Z" fill="#f4f4f4"/>
<ellipse cx="923.8" cy="295.4" rx="8.4" ry="5.8" transform="rotate(46 923.8 295.4)" fill="#ececec"/>
<ellipse cx="923.8" cy="295.4" rx="5.6" ry="3.4" transform="rotate(46 923.8 295.4)" fill="#bcbcbc" stroke="#9a9a9a"/>
<path d="M933.4 291.7 L939.4 284.9 V288.4 H950.8 V294.6 H939.7 V298.5Z" fill="#7fc0e4" stroke="#2f6f96"/>
</g>
<!-- section view -->
<g stroke="#4f5f68" stroke-width="1" stroke-linejoin="round">
<path d="M962.2 279 C963.4 271.4 972 268.4 979.6 268.3 C988 268.4 995.4 270 996.5 272.2 L988.3 274.8 C985.6 272.6 979.6 272.4 976.1 277.8 L965.5 279.4Z" fill="#fbfbfb"/>
<path d="M962.2 278.6 L965.5 279.4 V301.4 L962.2 299.5Z" fill="#eef3f6"/>
<path d="M976.1 277.8 C978.4 272.6 985.6 272.4 988.3 274.8 V295.2 C985 292.2 979.4 291.8 976.1 293.6Z" fill="#e3e3e3"/>
<path d="M965.5 279.4 L976.1 277.8 V298.5 L965.5 301.4Z" fill="url(#hatch)"/>
<path d="M988.3 274.8 L996.5 272.3 V292.7 L988.3 295.2Z" fill="url(#hatch)"/>
</g>
<!-- view orientation -->
<g stroke="#555" stroke-width="1" stroke-linejoin="round" fill="none">
<path d="M1009.4 278.4 L1019 268.6 H1042.4 L1032.8 278.4Z M1032.8 278.4 L1042.4 268.6 V293 L1032.8 302.6Z" fill="#fdfdfd"/>
<rect x="1009.4" y="278.4" width="23.4" height="24.2" fill="url(#gLBv)"/>
<path d="M1019 268.6 V278.4 M1032.8 293 H1042.4" stroke-width="1"/>
<path d="M1024.8 269.4 V275.4 M1041.6 286 H1035.4" stroke-width="1.6"/>
<path d="M1024.8 277.6 l-2.6 -3.2 h5.2z M1033.4 286 l3.2 -2.6 v5.2z" fill="#4a4a4a" stroke="none"/>
</g>
<path d="M1053.8 283.2h10.2l-5.1 5.6z" fill="#9a9a9a"/>
<!-- display style -->
<g stroke="#5a5a5a" stroke-width="1" stroke-linejoin="round">
<path d="M1077.2 274.6 L1094 268.4 L1106.8 273.6 L1090 280.4Z" fill="#e9f3f9"/>
<path d="M1077.2 274.6 L1090 280.4 V302.4 L1077.2 294.4Z" fill="url(#gLBv)"/>
<path d="M1090 280.4 L1106.8 273.6 V294.6 L1090 302.4Z" fill="#f4f4f4"/>
<path d="M1090 280.4 L1097.4 277.4 V298.8 L1090 302.4Z" fill="#a9d3ea" stroke="none"/>
<path d="M1077.2 274.6 L1094 268.4 L1099.6 270.8 L1083 277.2Z" fill="#a9d3ea" stroke="none"/>
</g>
<path d="M1119.4 283.2h10.2l-5.1 5.6z" fill="#9a9a9a"/>
<!-- hide/show -->
<g>
<path d="M1140.4 285.4 C1147 273 1169 272.6 1175.8 285.4 C1169 298.4 1147 298.6 1140.4 285.4Z" fill="#ececec" stroke="#8a8a8a" stroke-width="1.1"/>
<circle cx="1158" cy="284.4" r="8.6" fill="#5e5e5e"/>
<path d="M1158 275.8 A8.6 8.6 0 0 1 1158 293Z" fill="#8a8a8a"/>
<ellipse cx="1160" cy="281" rx="2.4" ry="3.4" fill="#f2f2f2"/>
<path d="M1158 272.4 V299" stroke="#4a4a4a" stroke-width="2"/>
</g>
<path d="M1185.4 283.2h10.2l-5.1 5.6z" fill="#9a9a9a"/>
<!-- edit appearance (disabled) -->
<g>
<circle cx="1221.6" cy="283.8" r="15.8" fill="url(#gGrayBall)" stroke="#e0e0e0" stroke-width="1"/>
<path d="M1222.6 302.6 L1236.4 286 L1242 290.6 L1228.4 307 L1221.4 309Z" fill="#ececec" stroke="#e0e0e0" stroke-width="1"/>
</g>
<!-- apply scene -->
<g>
<path d="M1254.6 283.8 H1285 L1287 304.8 H1252.2Z" fill="#6a6a6a"/>
<g fill="#f0f0f0"><path d="M1256 285.4h6.4l-.4 4h-6.4z M1269 285.4h6.2l.2 4h-6.4z M1281.4 285.4h2.4l.4 4h-2.6z M1262 291.2h6.6v4.4h-7z M1275.4 291.2h6.4l.4 4.4h-6.6z M1254.6 297.6h6.8l-.4 5.2h-7z M1268.4 297.6h7l.2 5.2h-7.4z M1282.6 297.6h2.8l.4 5.2h-3z"/></g>
<g transform="translate(1269.7 282.8) scale(.86)"><use href="#ball4"/><circle r="16.2" fill="#fff" opacity=".22"/></g>
</g>
<path d="M1297.8 283.2h10.2l-5.1 5.6z" fill="#9a9a9a"/>
<!-- view settings -->
<g>
<rect x="1320.6" y="274" width="30.6" height="20.4" fill="#d9d9d9" stroke="#5e5e5e" stroke-width="1.6"/>
<rect x="1323" y="276.4" width="25.8" height="15.6" fill="url(#gGrayBall)"/>
<path d="M1336 295 V299.4 M1330 300 H1342" stroke="#5e5e5e" stroke-width="2.2"/>
</g>
<path d="M1364 283.2h10.2l-5.1 5.6z" fill="#9a9a9a"/>
<!-- document window buttons -->
<g fill="none" stroke="#a9a9a9" stroke-width="1">
<rect x="1610.4" y="230" width="23" height="24.2"/><rect x="1656.6" y="230" width="23" height="24.2"/>
<path d="M1610.4 231.4h23M1656.6 231.4h23" stroke-width="2.8"/>
<rect x="1747.4" y="238.6" width="17.4" height="14.6"/><path d="M1754.6 238.2 V231.6 H1772.4 V246 H1765.2"/>
<path d="M1747.4 239.6h17.4M1754.6 232.4h17.8" stroke-width="2.4"/>
<path d="M1792.4 228.8 L1819.8 255.6 M1819.8 228.8 L1792.4 255.6" stroke="#9a9a9a" stroke-width="1.4"/>
</g>
<path d="M1611.6 243.4 l3.8 -4 v8z M1678.6 243.4 l-3.8 -4 v8z" fill="#9a9a9a"/>
<rect x="1703" y="251.4" width="21.8" height="3.2" fill="#a9a9a9"/>
<!-- confirmation corner -->
<path d="M1670 325.2 H1630 V356 C1630.2 366.4 1635.6 372.6 1645 372.6 H1675" fill="none" stroke="#d4e3ed" stroke-width="3.2"/>
<path d="M1672.4 372.6 L1691 353.6 L1691 364.2 C1702.6 364 1711.6 360 1715.6 353 C1716.6 370.6 1706 380.6 1691 381.4 L1691 391.8Z" fill="#c9dfec" stroke="#bcd5e4" stroke-width="1.4" stroke-linejoin="round"/>
<path d="M1723 388.4 L1762.2 427.2 M1762.2 388.4 L1723 427.2" stroke="#f3c6c6" stroke-width="11.8" stroke-linecap="butt" stroke-linejoin="round"/>
</svg>
<!-- task pane -->
<div class="tp" style="top:314px;background:#f6f6f6"></div>
<div class="tp" style="top:362px"></div>
<div class="tp" style="top:410px"></div>
<div class="tp" style="top:458px"></div>
<div class="tp" style="top:506px"></div>
<div class="tp" style="top:554px"></div>
<div class="tp" style="top:602px;height:48.5px"></div>
<svg id="tp-icons" style="left:0;top:0" width="1838" height="700" viewBox="0 0 1838 700">
<defs><linearGradient id="gCubeL2" x1="0" y1="0" x2="1" y2="1"><stop offset="0" stop-color="#f4f4f4"/><stop offset="1" stop-color="#bdbdbd"/></linearGradient></defs>
<!-- home -->
<g>
<path d="M1796.6 338.4 L1809.8 325.4 L1823 338.4Z" fill="#f3f3f3"/>
<path d="M1796.6 338.4 H1823 V355.4 H1796.6Z" fill="url(#gGray)"/><path d="M1796.6 337 V355.4 H1823 V337" fill="none" stroke="#333" stroke-width="1.3"/>
<path d="M1805.4 355.4 V342 H1814 V355.4" fill="#f4f4f4" stroke="#333" stroke-width="1.2"/>
<circle cx="1812" cy="349" r="1" fill="#222"/>
<path d="M1793.2 338.6 L1809.8 322 L1826.4 338.6 L1824.4 340.8 L1809.8 326.2 L1795.2 340.8Z" fill="#4a90be" stroke="#1f4f6e" stroke-width="1.2" stroke-linejoin="round"/>
</g>
<!-- design library books -->
<g stroke="#3a3a3a" stroke-width="1" stroke-linejoin="round">
<path d="M1796.2 373.2 L1802.6 369.4 L1804.6 371.6 L1809.6 369.4 L1811.6 371.2 L1815.8 368.9 L1823.9 373.5 L1804.1 378Z" fill="#fafafa"/>
<path d="M1796.2 373.2 L1804.1 378 V402.9 L1796.2 393.8Z" fill="url(#gCubeL2)"/>
<path d="M1804.1 378 L1810.7 376.5 V401.4 L1804.1 402.9Z" fill="url(#gFold)"/>
<path d="M1810.7 376.5 L1817.3 375 V399.6 L1810.7 401.4Z" fill="url(#gFold)"/>
<path d="M1817.3 375 L1823.9 373.5 V397.6 L1817.3 399.6Z" fill="url(#gFold)"/>
</g>
<!-- file explorer -->
<g stroke="#4a4a4a" stroke-width="1.1" stroke-linejoin="round">
<path d="M1795.4 446.6 V419.4 H1806 L1808 423 H1824 V430" fill="#cfcfcf"/>
<path d="M1795.4 446.6 L1802 429.6 H1828 L1821.4 446.6Z" fill="url(#gFold)"/>
</g>
<!-- view palette -->
<g>
<rect x="1793.4" y="467.6" width="33.2" height="30" fill="#fcfcfc" stroke="#3a3a3a" stroke-width="1.1"/>
<g fill="#f7c61c" stroke="#8a6a00" stroke-width=".9">
<rect x="1796.6" y="471" width="13" height="7"/><rect x="1814.6" y="471" width="9" height="7"/>
<path d="M1801.6 483.4 h5 v5 h4.6 v5.600000000000023 h-14.2 v-5.600000000000023 h4.6z"/>
</g>
<rect x="1814.8" y="485" width="11.6" height="12.4" fill="#dedede" stroke="#5a5a5a" stroke-width=".9"/><rect x="1814.8" y="485" width="11.6" height="3.4" fill="#8a8a8a"/>
</g>
<!-- appearances -->
<ellipse cx="1811" cy="546" rx="13" ry="3" fill="#000" opacity=".15"/>
<g transform="translate(1809.8 530.6) scale(1.02)"><use href="#ball4"/></g>
<!-- custom properties -->
<g>
<rect x="1792.6" y="562.4" width="34" height="30.8" fill="#f1f1f1" stroke="#3a3a3a" stroke-width="1.1"/>
<rect x="1793.2" y="563" width="32.8" height="4.6" fill="#5ea3cb"/>
<g fill="#74b4da" stroke="#2d6288" stroke-width=".9"><rect x="1796.4" y="570.8" width="8" height="4.4"/><rect x="1796.4" y="578.2" width="8" height="4.4"/><rect x="1796.4" y="585.6" width="8" height="4.4"/></g>
<path d="M1808.4 573h14M1808.4 580.4h14M1808.4 587.8h14" stroke="#222" stroke-width="1.6"/>
</g>
<!-- forum -->
<g stroke-linejoin="round">
<path d="M1801.4 618.6 H1812.6 V626.6 H1806.6 L1804 629.4 V626.6 H1801.4Z" fill="#6db2dc" stroke="#2d6288" stroke-width="1"/>
<path d="M1808.6 622.8 H1819.2 V630.4 H1817 V633.2 L1814.2 630.4 H1808.6Z" fill="#f4f4f4" stroke="#4a4a4a" stroke-width="1"/>
</g>
</svg>
<svg id="relations" style="left:0;top:0" width="1838" height="1400" viewBox="0 0 1838 1400">
<defs>
<g id="relX" shape-rendering="crispEdges">
 <rect x="0" y="0" width="24.4" height="24.2" fill="#0ccf3a"/>
 <path d="M1.4 2.4 L23 23" stroke="#000" stroke-width="2" fill="none" shape-rendering="auto"/>
 <path d="M20.4 1 L16 4.6 L14 9 M12 10.4 L8.4 21 V23.4" stroke="#000" stroke-width="2" fill="none" shape-rendering="auto"/>
 <rect x="23.6" y="3.4" width="2.4" height="14.4" fill="#000"/>
 <rect x="21.4" y="3.4" width="2.4" height="2.4" fill="#000"/>
 <g fill="#e8ffe8"><rect x="9.4" y="10" width="2" height="2"/><rect x="13.4" y="10" width="2" height="2"/><rect x="9.4" y="14.2" width="2" height="2"/><rect x="13.4" y="14.2" width="2" height="2"/></g>
 <g fill="#000"><rect x="7.4" y="12" width="2" height="2"/><rect x="15.4" y="12" width="2" height="2"/><rect x="11.4" y="8" width="2" height="2"/><rect x="11.4" y="16.2" width="2" height="2"/></g>
</g>
<g id="relT">
 <rect x="0" y="0" width="24.2" height="24.2" fill="#0ccf3a"/>
 <path d="M7 1.1 L23.3 17.2" stroke="#000" stroke-width="2" fill="none"/>
 <path d="M5.4 9.2 H10.4 L15 13.8 V18.8 L10.4 23.4 H5.4 L.9 18.8 V13.8Z" fill="none" stroke="#000" stroke-width="2"/>
</g>
</defs>
<use href="#relX" x="752.7" y="460.9"/>
<use href="#relT" x="887.9" y="522.7"/>
<use href="#relX" x="1063" y="545"/>
<use href="#relT" x="962.8" y="691.9"/>
<use href="#relX" x="848.8" y="976.2"/>
<!-- triad -->
<defs>
<linearGradient id="gGr" x1="0" y1="0" x2="1" y2="0"><stop offset="0" stop-color="#1f6a22"/><stop offset=".5" stop-color="#8fe08a"/><stop offset="1" stop-color="#1f6a22"/></linearGradient>
<linearGradient id="gRd" x1="0" y1="0" x2="0" y2="1"><stop offset="0" stop-color="#b01212"/><stop offset=".5" stop-color="#ff9a9a"/><stop offset="1" stop-color="#b01212"/></linearGradient>
</defs>
<rect x="442.8" y="1190" width="8" height="42" fill="url(#gGr)"/>
<path d="M446.8 1173.6 L456 1192.4 H437.6Z" fill="#1f7a24"/>
<rect x="450" y="1230" width="40" height="8" fill="url(#gRd)"/>
<path d="M506.8 1234 L489 1225 V1243Z" fill="#c41616"/>
<circle cx="446.6" cy="1234" r="8.8" fill="#10109a"/>
<path d="M443.6 1238.4 L447.8 1230.6 L449.6 1231.6 L445.6 1239.4Z" fill="#3a3ad0" opacity=".9"/>
</svg>
<div class="labels">
<span class="t" style="left:380.0px;top:1305.3px;font-size:24.8px;font-weight:bold;-webkit-text-stroke:0.35px currentColor;letter-spacing:0.091px;">*Front</span>
<span class="t" style="left:441.0px;top:1150.0px;font-size:24px;color:#1f7a2e;">Y</span>
<span class="t" style="left:508.0px;top:1221.4px;font-size:23.5px;color:#d11;">X</span>
</div>
</main>
<aside id="featuremanager">
<!-- FeatureManager panel -->
<div class="a" id="fm" style="left:2px;top:261px;width:365px;height:1070px;background:#f6f6f6;border-right:1px solid #80808f;border-top:1px solid #c8c8c8;box-sizing:content-box"></div>
<div class="a" style="left:2px;top:298px;width:363px;height:1px;background:#d9d9d9"></div>
<div class="a" style="left:177px;top:275px;width:10px;height:10px;border-radius:50%;background:radial-gradient(circle at 40% 35%,#e8e8e8,#b8b8b8);border:1px solid #9a9a9a;box-sizing:border-box"></div>
<div class="ptab" style="left:64px;width:61px"></div>
<div class="ptab" style="left:124px;width:61px"></div>
<div class="ptab" style="left:184px;width:61px"></div>
<div class="ptab" style="left:244px;width:61px"></div>
<div class="a" style="left:2px;top:305px;width:62px;height:1px;background:#b9b9b9"></div>
<div class="a" id="filterbox" style="left:5px;top:348px;width:360px;height:50.5px;border:1px solid #d0d0d0;box-sizing:border-box;background:#f3f3f3"></div>
<div class="a" style="left:2px;top:839px;width:363px;height:3px;background:linear-gradient(#d4d4de,#9292a8 55%,#d8d8e0)"></div>
<!-- panel splitter tab -->
<div class="a" style="left:367px;top:734px;width:19px;height:78px;background:#f6f6f6;border:1px solid #80808f;border-left:none;box-sizing:border-box"></div>
<div class="a" style="left:370.2px;top:767px;width:11.6px;height:11.6px;border-radius:50%;background:radial-gradient(circle at 40% 35%,#e8e8e8,#b8b8b8);border:1px solid #9a9a9a;box-sizing:border-box"></div>
<!-- h scrollbar -->
<div class="a" style="left:2px;top:1297px;width:363px;height:32px;background:#f0f0f0"></div>
<div class="a" style="left:35px;top:1297px;width:211px;height:32px;background:#cdcdcd"></div>
<svg id="panel-icons" style="left:0;top:0" width="400" height="1340" viewBox="0 0 400 1340">
<defs>
<linearGradient id="gFold" x1="0" y1="0" x2="1" y2="1"><stop offset="0" stop-color="#ffffff"/><stop offset="1" stop-color="#c9c9c9"/></linearGradient>
<linearGradient id="gYel" x1="0" y1="0" x2="0" y2="1"><stop offset="0" stop-color="#ffe46a"/><stop offset="1" stop-color="#e9b40e"/></linearGradient>
<radialGradient id="gBall" cx=".38" cy=".3" r=".8"><stop offset="0" stop-color="#ffffff" stop-opacity=".85"/><stop offset=".35" stop-color="#ffffff" stop-opacity="0"/><stop offset="1" stop-color="#000" stop-opacity=".25"/></radialGradient>
<g id="lblock" stroke="#5e4a00" stroke-width="1" stroke-linejoin="round">
 <path d="M19.5 321.2 L25.4 319.2 V312.2 L32.9 315.5 V325.4 L40.4 331.1 V343.3 L19.5 328Z" fill="#f2c21a"/>
 <path d="M25.4 312.2 L34.2 309.5 L41.9 312.9 L32.9 315.5Z M32.9 325.4 L41.9 322.3 L49.7 327.1 L40.4 331.1Z" fill="#ffec8a"/>
 <path d="M32.9 315.5 L41.9 312.9 V322.3 L32.9 325.4Z M40.4 331.1 L49.7 327.1 V335.2 L40.4 343.3Z" fill="#fad848"/>
</g>
<g id="tlight">
 <rect x="0" y="0" width="13" height="26" rx="6.5" fill="#2c2c2c" stroke="#161616" stroke-width=".8"/>
 <circle cx="6.5" cy="7.4" r="4.5" fill="url(#gRed)"/>
 <circle cx="6.5" cy="18.8" r="4.5" fill="url(#gGreen)"/>
</g>
<g id="folder" stroke-linejoin="round">
 <path d="M.5 30 V1.5 Q.5 .5 1.5 .5 H10.5 L12.5 4.5 H34 Q35 4.5 35 5.5 V30Z" fill="#d4d4d4" stroke="#666" stroke-width="1"/>
 <path d="M.5 30 V6.5 H35 V30Z" fill="url(#gFold)" stroke="#555" stroke-width="1"/>
</g>
<g id="plane" fill="none" stroke="#2a2a2a">
 <path d="M55.2 7.4 L76.3 .6 V23.4 L55.2 31.4Z" stroke-width="1"/>
 <path d="M66.5 -.6 V35" stroke-width="1" stroke-dasharray="3.5 1.8"/>
</g>
</defs>
<!-- panel tab icons -->
<use href="#lblock"/>
<g><!-- property manager -->
<rect x="76.6" y="311.8" width="34" height="30.4" fill="#f1f1f1" stroke="#3a3a3a" stroke-width="1.2"/>
<rect x="77.2" y="312.4" width="32.8" height="4.6" fill="#5ea3cb"/>
<g fill="#74b4da" stroke="#2d6288" stroke-width=".9"><rect x="80.5" y="320" width="8" height="4.4"/><rect x="80.5" y="327.4" width="8" height="4.4"/><rect x="80.5" y="334.8" width="8" height="4.4"/></g>
<path d="M92.5 322.2h14M92.5 329.6h14M92.5 337h14" stroke="#222" stroke-width="1.6"/>
</g>
<g stroke="#4a4a4a" stroke-width="1.1" fill="url(#gFold)"><!-- configuration manager -->
<path d="M140.6 311 H145.4 V343.6 H140.6Z" fill="#e8e8e8"/>
<path d="M145.4 318.4 H152 M145.4 337 H156" fill="none" stroke-width="2"/>
<rect x="151" y="312.6" width="13" height="13"/><rect x="154.6" y="330" width="13" height="13"/>
</g>
<g fill="none" stroke="#1c1c1c"><!-- dimxpert -->
<circle cx="213.8" cy="326.5" r="17" fill="#fff" opacity=".35" stroke="none"/>
<circle cx="213.8" cy="326.5" r="12" stroke-width="2.6"/>
<path d="M213.8 309.3 V344.2 M196.3 326.5 H232" stroke-width="2.4"/>
</g>
<g><!-- display manager ball -->
<circle cx="274.2" cy="326.5" r="16.8" fill="#2a62c8"/>
<path d="M274.2 326.5 L257.4 326.5 A16.8 16.8 0 0 0 274.2 343.3Z" fill="#3bb13b"/>
<path d="M274.2 326.5 V343.3 A16.8 16.8 0 0 0 291 326.5Z" fill="#f2c81c"/>
<path d="M274.2 326.5 H291 A16.8 16.8 0 0 0 278 310.1Z" fill="#d92a1c"/>
<path d="M274.2 326.5 L278.4 310.2 A16.8 16.8 0 0 0 257.4 326.5Z" fill="#2a62c8"/>
<ellipse cx="283.8" cy="319.4" rx="5.8" ry="8.8" transform="rotate(-28 283.8 319.4)" fill="#0a0a0a" stroke="#c8241a" stroke-width="1.2"/>
<circle cx="274.2" cy="326.5" r="16.8" fill="url(#gBall)"/>
</g>
<path d="M343 315.6 L352.6 325.4 L343 335.2" fill="none" stroke="#808080" stroke-width="4"/>
<!-- filter funnel -->
<path d="M14 364 L25.2 376.8 V388 L33.7 392.7 V376.8 L45 364Z" fill="url(#gFold)" stroke="#5a5a5a" stroke-width="1.1" stroke-linejoin="round"/>
<rect x="13" y="357" width="33" height="7.8" rx="3" fill="#5fb0de" stroke="#2d6e98" stroke-width="1.1"/>
<rect x="17" y="358.6" width="16" height="3" rx="1.5" fill="#b8e2f6" opacity=".8"/>
<!-- Part1 -->
<g stroke="#5e4a00" stroke-width="1" stroke-linejoin="round">
 <path d="M14.6 407.8 L21.8 411 V419.6 L28.4 422.6 V438 L14.6 431Z" fill="#f2c21a"/>
 <path d="M14.6 407.8 L23.4 404 L30.6 407.2 L21.8 411Z M21.8 419.6 L30.6 416.2 L38.6 420.2 L28.4 422.6Z" fill="#ffec8a"/>
 <path d="M21.8 411 L30.6 407.2 V416.2 L21.8 419.6Z M28.4 422.6 L38.6 420.2 V431 L28.4 438Z" fill="#fad848"/>
</g>
<use href="#tlight" x="4.4" y="412.6" transform="translate(4.4 412.6) scale(1.02 1.05) translate(-4.4 -412.6)"/>
<!-- expand arrows -->
<path d="M19.6 457.6 L26 464 L19.6 470.6Z M19.6 545.6 L26 552 L19.6 558.6Z" fill="#5a5a5a"/>
<!-- History -->
<use href="#folder" x="48.2" y="449.2"/>
<circle cx="67" cy="467.7" r="8.4" fill="#ececec" stroke="#2a2a2a" stroke-width="1.9"/>
<path d="M66.6 457.4 C60.4 457.2 56.8 460.6 55.8 463.4 L53.8 466.6 L61.8 471 L60.8 467 C61.4 464 63.6 462 66.6 461.8Z" fill="#2f7fb8" stroke="#1f5f8a" stroke-width=".6" stroke-linejoin="round"/>
<path d="M67 460 V467.7 H72.4" fill="none" stroke="#1a1a1a" stroke-width="1.5"/>
<circle cx="67" cy="467.7" r="1.5" fill="#fff" stroke="#1a1a1a" stroke-width=".7"/>
<!-- Sensors -->
<use href="#folder" x="48.2" y="493.2"/>
<circle cx="66.4" cy="511.4" r="10.2" fill="#fbfbfb" stroke="#4a4a4a" stroke-width="1.1"/>
<path d="M74.2 509.6 A8 8 0 0 1 71.4 517.6" fill="none" stroke="#e0281a" stroke-width="3.4"/>
<path d="M66.4 511.4 L72.2 505.3" stroke="#3a6f94" stroke-width="1.7" stroke-linecap="round"/>
<circle cx="66.4" cy="511.4" r="1.7" fill="#2d5f85"/>
<path d="M58.2 511.2h1.8M60.2 505.6l1.3 1.2M66.4 503.2v1.8M60.4 517l1.3-1" stroke="#444" stroke-width=".9"/>
<!-- Annotations -->
<use href="#folder" x="48.2" y="537.2"/>
<text x="66.8" y="566" font-family="Liberation Serif, serif" font-weight="bold" font-size="33" text-anchor="middle" fill="#3c88bc" stroke="#1d5a86" stroke-width=".9">A</text>
<!-- Material -->
<g>
<circle cx="50.8" cy="582" r="3.9" fill="#d6d6d6" stroke="#7a7a7a" stroke-width="1"/>
<circle cx="50.8" cy="594.8" r="3.9" fill="#4a9cd0" stroke="#22628e" stroke-width="1"/>
<circle cx="50.8" cy="607.6" r="3.9" fill="#f2c828" stroke="#a57e06" stroke-width="1"/>
<path d="M58.4 582 H80.6 M58.4 594.8 H80.6 M58.4 607.6 H66" stroke="#333" stroke-width="3.6"/>
<g transform="translate(74.6 605.6) scale(.56)"><path fill="#1e1e1e" stroke="#f6f6f6" stroke-width="1.6" d="M-3.2 -17 H3.2 L4.2 -12.3 L7.3 -10.9 L11.3 -13.6 L15.2 -9.2 L12.6 -5.4 L13.6 -2.6 L17 -2.2 V3.4 L13 4.4 L11.8 7.4 L14.4 11.2 L10.3 15.3 L6.4 12.6 L3.6 13.8 L2.8 17.4 H-3.2 L-4.2 13.4 L-7 12.2 L-11 14.8 L-15 10.6 L-12.4 6.8 L-13.6 3.8 L-17.4 3 V-2.8 L-13.4 -3.6 L-12.2 -6.6 L-14.8 -10.4 L-10.6 -14.4 L-6.8 -11.8 L-4 -13Z"/><circle r="5.6" fill="#f6f6f6"/></g>
</g>
<!-- planes -->
<use href="#plane" y="624"/><use href="#plane" y="668"/><use href="#plane" y="712"/>
<!-- origin -->
<g fill="#222" stroke="#222">
<path d="M54.2 764 V785 H74" fill="none" stroke-width="2"/>
<path d="M54.2 755.6 L59.2 764.6 H49.2Z M83.6 784.9 L73.4 790 V779.8Z" stroke="none"/>
<rect x="50.2" y="781" width="7.8" height="7.8" stroke="none"/>
</g>
<!-- Sketch1 -->
<g>
<rect x="50" y="802" width="34" height="30" fill="#fdfdfd"/>
<path d="M56 801.5 V832 M63 801.5 V832 M70 801.5 V832 M77 801.5 V832 M84 803 V832 M49 807.5 H84 M49 814.5 H84 M49 821.5 H84 M49 828.5 H84" stroke="#d4dae2" stroke-width="1"/>
<path d="M75.4 800.8 H48.8 V812" fill="none" stroke="#3b87ae" stroke-width="1.8"/>
<path d="M60.8 832.8 H84" stroke="#3b87ae" stroke-width="1.8"/>
<use href="#tlight" x="47.4" y="808.6"/>
</g>
<!-- scrollbar arrows -->
<path d="M22.5 1306 L14.5 1312.6 L22.5 1319.2 M344.5 1306 L352.5 1312.6 L344.5 1319.2" fill="none" stroke="#5e5e5e" stroke-width="2.6"/>
</svg>
<div class="labels">
<span class="t" style="left:46.4px;top:412.1px;font-size:23.2px;max-width:319.5px;overflow:hidden;word-spacing:-1.7px;letter-spacing:0.630px;transform-origin:0 84.65%;transform:scaleY(1.043);"><span style="letter-spacing:-0.3px">Part1</span>  (Default&lt;&lt;Default&gt;_Display State 1&gt;)</span>
<span class="t" style="left:90.0px;top:456.1px;font-size:23.2px;letter-spacing:0.314px;transform-origin:0 84.65%;transform:scaleY(1.043);">History</span>
<span class="t" style="left:90.0px;top:500.1px;font-size:23.2px;letter-spacing:-0.548px;transform-origin:0 84.65%;transform:scaleY(1.043);">Sensors</span>
<span class="t" style="left:90.0px;top:544.1px;font-size:23.2px;letter-spacing:0.582px;transform-origin:0 84.65%;transform:scaleY(1.043);">Annotations</span>
<span class="t" style="left:90.0px;top:588.1px;font-size:23.2px;letter-spacing:0.656px;transform-origin:0 84.65%;transform:scaleY(1.043);">Material &lt;not specified&gt;</span>
<span class="t" style="left:90.0px;top:632.1px;font-size:23.2px;letter-spacing:0.012px;transform-origin:0 84.65%;transform:scaleY(1.043);">Front Plane</span>
<span class="t" style="left:90.0px;top:676.1px;font-size:23.2px;letter-spacing:0.219px;transform-origin:0 84.65%;transform:scaleY(1.043);">Top Plane</span>
<span class="t" style="left:90.0px;top:720.1px;font-size:23.2px;letter-spacing:0.010px;transform-origin:0 84.65%;transform:scaleY(1.043);">Right Plane</span>
<span class="t" style="left:90.0px;top:764.1px;font-size:23.2px;letter-spacing:0.444px;transform-origin:0 84.65%;transform:scaleY(1.043);">Origin</span>
<span class="t" style="left:90.0px;top:808.1px;font-size:23.2px;letter-spacing:0.020px;transform-origin:0 84.65%;transform:scaleY(1.043);">(-) Sketch1</span>
</div>
</aside>
<footer id="statusbar">
<!-- bottom tabs + status bar -->
<div class="a" style="left:2px;top:1331px;width:1834px;height:1px;background:#8f8f8f"></div>
<div class="a" style="left:2px;top:1332px;width:1833px;height:33px;background:#f6f6f6"></div>
<div class="a" style="left:1835px;top:1332px;width:1px;height:33px;background:#8a8a8a"></div>
<div class="a" style="left:2px;top:1332px;width:98px;height:33px;background:#fff"></div>
<div class="a" style="left:209px;top:1332px;width:223px;height:33px;background:#d2d2d2;border:1px solid #a3a3a3;border-top:none;box-sizing:border-box"></div>
<div class="a" style="left:100px;top:1332px;width:1px;height:33px;background:#a3a3a3"></div>
<div class="a" style="left:101px;top:1331px;width:108px;height:1px;background:#f4f4f4"></div>
<div class="a" style="left:4px;top:1332px;width:96px;height:23px;background:#b6b6c8"></div>
<div class="a" style="left:2px;top:1365px;width:1834px;height:1px;background:#777"></div>
<div class="a" style="left:2px;top:1366px;width:1834px;height:32px;background:#f6f6f6"></div>
<svg id="bottom-icons" style="left:0;top:1328px" width="1838" height="72" viewBox="0 1328 1838 72">
<!-- nav buttons -->
<path d="M3.8 1331.4 H100" stroke="#1a1a1a" stroke-width="1.2"/>
<g fill="#a7a7bd" stroke="#9696ac" stroke-width="1">
<rect x="4.5" y="1332.5" width="21.6" height="22"/><rect x="28.8" y="1332.5" width="21.6" height="22"/><rect x="53.1" y="1332.5" width="21.6" height="22"/><rect x="77.4" y="1332.5" width="21.6" height="22"/>
</g>
<g fill="#9090a8">
<path d="M18.6 1336.6 V1350.4 L11.6 1343.5Z"/><rect x="10.2" y="1336.6" width="1.8" height="13.8"/>
<path d="M42.6 1336.6 V1350.4 L35.4 1343.5Z"/>
<path d="M60.6 1336.6 V1350.4 L67.8 1343.5Z"/>
<path d="M84.4 1336.6 V1350.4 L91.4 1343.5Z"/><rect x="91" y="1336.6" width="1.8" height="13.8"/>
</g>
<!-- status separators -->
<path d="M1323.5 1368 V1397 M1506.5 1368 V1397 M1554.5 1368 V1397" stroke="#dcdcdc" stroke-width="1"/>
<!-- status traffic light -->
<rect x="1530.2" y="1370.6" width="12.6" height="26" rx="6.3" fill="#2c2c2c" stroke="#161616" stroke-width=".8"/>
<circle cx="1536.5" cy="1378" r="4.3" fill="url(#gRed)"/>
<circle cx="1536.5" cy="1390" r="4.3" fill="url(#gGreen)"/>
<path d="M1692.6 1384.4 l3.2 -3.4 l3.2 3.4z" fill="#2a2a2a"/>
<!-- tag -->
<g stroke="#1e1e1e" stroke-width="1.3" stroke-linejoin="round" fill="#f2f2f2">
<path d="M1767.6 1371 L1778.6 1369.6 L1794.6 1381 V1385.6 L1783.4 1396.6 L1767.2 1384.6Z"/>
<path d="M1767.2 1381.4 L1783.4 1392.6 L1794.6 1381" fill="none" stroke-width="1"/>
<circle cx="1773.6" cy="1375.6" r="2.8" fill="none" stroke-width="1.1"/>
<path d="M1776 1381.6 L1781.6 1375.6 M1779.4 1384 L1785 1378 M1782.8 1386.4 L1788.4 1380.4" fill="none" stroke-width="1.5"/>
</g>
<!-- resize grip -->
<g fill="#b4b0ae">
<rect x="1828.4" y="1378.2" width="3.6" height="3.6"/>
<rect x="1822.4" y="1384.2" width="3.6" height="3.6"/><rect x="1828.4" y="1384.2" width="3.6" height="3.6"/>
<rect x="1816.4" y="1390.2" width="3.6" height="3.6"/><rect x="1822.4" y="1390.2" width="3.6" height="3.6"/><rect x="1828.4" y="1390.2" width="3.6" height="3.6"/>
</g>
</svg>
<div class="labels">
<span class="t" style="left:120.0px;top:1338.0px;font-size:25.3px;font-weight:bold;letter-spacing:0.649px;">Model</span>
<span class="t" style="left:228.2px;top:1338.0px;font-size:25.3px;letter-spacing:0.285px;">Motion Study 1</span>
<span class="t" style="left:4.5px;top:1374.6px;font-size:22.5px;letter-spacing:0.192px;transform-origin:0 84.65%;transform:scaleY(1.065);">SOLIDWORKS Premium 2018 x64 Edition</span>
<span class="t" style="left:1160.0px;top:1374.6px;font-size:22.5px;letter-spacing:0.873px;transform-origin:0 84.65%;transform:scaleY(1.065);">Under Defined</span>
<span class="t" style="left:1335.0px;top:1374.6px;font-size:22.5px;letter-spacing:0.527px;transform-origin:0 84.65%;transform:scaleY(1.065);">Editing Sketch1</span>
<span class="t" style="left:1594.0px;top:1374.6px;font-size:22.5px;letter-spacing:0.857px;transform-origin:0 84.65%;transform:scaleY(1.065);">MMGS</span>
</div>
</footer>
</body>
</html>
